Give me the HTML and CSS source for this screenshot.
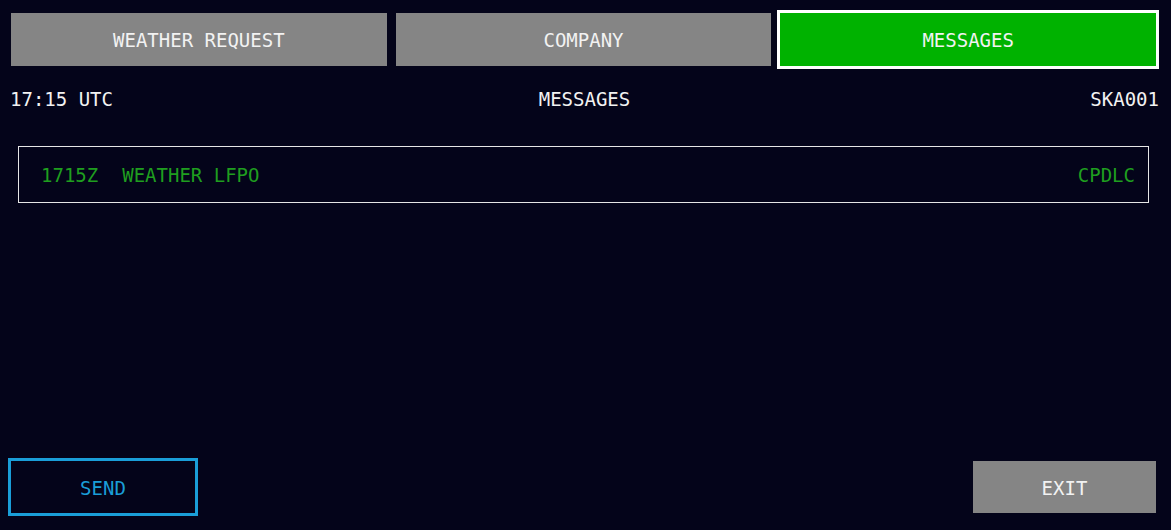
FILE: index.html
```html
<!DOCTYPE html>
<html>
<head>
<meta charset="utf-8">
<link rel="stylesheet" href="styles.css">
</head>
<body>
<div class="screen">
  <nav class="tabs">
    <div class="tab">WEATHER REQUEST</div>
    <div class="tab">COMPANY</div>
    <div class="tab active">MESSAGES</div>
  </nav>
  <header class="status">
    <span class="time">17:15 UTC</span>
    <span class="title">MESSAGES</span>
    <span class="flight">SKA001</span>
  </header>
  <section class="list">
    <div class="msg">
      <span class="msg-time">1715Z</span>
      <span class="msg-text">WEATHER LFPO</span>
      <span class="msg-type">CPDLC</span>
    </div>
  </section>
  <footer class="actions">
    <button class="btn send">SEND</button>
    <button class="btn exit">EXIT</button>
  </footer>
</div>
</body>
</html>
```
FILE: styles.css
```css
html, body {
  margin: 0;
  padding: 0;
  background: #04041a;
  height: 100%;
}
.screen {
  box-sizing: border-box;
  height: 530px;
  padding: 10px 12px 14px 8px;
  display: flex;
  flex-direction: column;
  font-family: "DejaVu Sans Mono", "Liberation Mono", monospace;
  font-size: 19px;
  line-height: 20px;
  color: #f2f2f2;
}
.tabs {
  display: grid;
  grid-template-columns: 1fr 1fr 1fr;
  gap: 3px;
}
.tab {
  height: 52px;
  border: 3px solid transparent;
  background: #858585;
  background-clip: padding-box;
  display: flex;
  align-items: center;
  justify-content: center;
  padding-top: 1px;
  box-sizing: content-box;
}
.tab.active {
  background: #00b200;
  border-color: #ffffff;
}
.status {
  margin-top: 20px;
  display: grid;
  grid-template-columns: 1fr auto 1fr;
  padding-left: 2px;
}
.title {
  text-align: center;
}
.flight {
  text-align: right;
}
.list {
  margin-top: 37px;
  padding: 0 10px;
}
.msg {
  border: 1px solid #e6e6e6;
  padding: 18px 13px 17px 22px;
  display: flex;
  color: #1f9e1f;
}
.msg-time {
  margin-right: 24px;
}
.msg-type {
  margin-left: auto;
}
.actions {
  margin-top: auto;
  display: flex;
  justify-content: space-between;
}
.btn {
  font: inherit;
  box-sizing: border-box;
  height: 58px;
  border: 3px solid transparent;
  display: flex;
  align-items: center;
  justify-content: center;
  padding: 1px 0 0;
  margin: 0;
}
.send {
  width: 190px;
  border-color: #1a9ed8;
  background: transparent;
  color: #1a9ed8;
}
.exit {
  width: 189px;
  background: #858585;
  background-clip: padding-box;
  color: #f2f2f2;
}
```
